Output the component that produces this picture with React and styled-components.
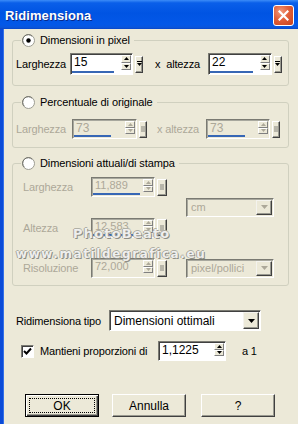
import React from "react";
import styled, { createGlobalStyle, css } from "styled-components";

const Global = createGlobalStyle`
  html, body { margin: 0; padding: 0; background: #ECE9D8; }
  body {
    width: 298px; height: 424px; overflow: hidden;
    font-family: "Liberation Sans", Arial, sans-serif; font-size: 11px; color: #000;
  }
  #root { width: 298px; height: 424px; }
`;

const GREY = "#ACA899";

const Window = styled.div`
  width: 298px; height: 424px; display: flex; flex-direction: column; background: #ECE9D8;
`;

const TitleBar = styled.div`
  height: 29px; flex: none; display: flex; align-items: center; justify-content: space-between;
  padding: 0 4px 0 5px; box-sizing: border-box;
  background: linear-gradient(to bottom, #3C8CF8 0%, #0A5FE9 10%, #0054E3 45%, #0358E8 85%, #0A56DC 94%, #0846C8 100%);
`;

const Title = styled.span`
  font: bold 13px "Liberation Sans", Arial, sans-serif; color: #fff;
  text-shadow: 1px 1px 0 #0A2A8A; letter-spacing: 0.1px; margin-top: 1px;
`;

const CloseBtn = styled.div`
  width: 21px; height: 21px; box-sizing: border-box; border: 1px solid #fff; border-radius: 3px;
  background: radial-gradient(circle at 35% 30%, #F29A7C 0%, #E2603A 45%, #C8421C 100%);
  display: flex; align-items: center; justify-content: center; margin-top: 1px;
`;

const Body = styled.div`
  flex: 1; display: flex; flex-direction: column; position: relative;
  border-left: 3px solid #0B4BD8; box-shadow: inset 1px 0 0 #3470E8;
  padding: 5px 9px 0 9px;
`;

const Group = styled.fieldset`
  margin: ${p => p.$mt}px 0 0 0; padding: 0; min-width: 0;
  border: 1px solid #D0D0BF; border-radius: 3px; position: relative;
`;

const Legend = styled.legend`
  margin-left: 8px; padding: 0 4px 0 1px; height: 13px; line-height: 13px;
  display: flex; align-items: center; gap: 5px;
  color: #000; font-size: 11px; letter-spacing: -0.1px;
`;

const Row = styled.div`
  display: flex; align-items: center;
  padding: ${p => p.$pad};
`;

const Label = styled.span`
  color: ${p => (p.$disabled ? GREY : "#000")};
  margin-left: ${p => p.$ml || 0}px;
  font-size: 11px; letter-spacing: -0.15px; white-space: nowrap;
  width: ${p => (p.$w ? `${p.$w}px` : "auto")};
  flex: none;
`;

const FieldGroup = styled.div`
  display: flex; align-items: center; gap: ${p => p.$gap}px;
  margin-left: ${p => p.$ml || 0}px;
`;

const FieldBox = styled.div`
  position: relative; box-sizing: border-box;
  width: ${p => p.$w}px; height: ${p => p.$h}px;
  background: ${p => (p.$disabled ? "#ECE9D8" : "#fff")};
  border: 1px solid; border-color: #7A7A72 #FFFFFF #FFFFFF #7A7A72;
  box-shadow: inset 1px 1px 0 ${p => (p.$disabled ? "#A8A89E" : "#404040")};
  display: flex; align-items: stretch;
  &::after {
    content: ""; position: absolute; left: 1px; bottom: 1px; height: 2px;
    width: ${p => p.$fill}px; background: #3767B5;
  }
`;

const Value = styled.span`
  flex: 1; padding: 1px 0 0 3px; line-height: ${p => p.$size + 2}px;
  font-size: ${p => p.$size}px; color: ${p => (p.$disabled ? GREY : "#000")};
  white-space: nowrap; overflow: hidden;
`;

const Spinner = styled.div`
  width: 10px; display: flex; flex-direction: column; margin: 1px 1px 4px 0; flex: none;
`;

const SpinBtn = styled.div`
  flex: 1; box-sizing: border-box; background: #ECE9D8;
  border: 1px solid; border-color: #FFFFFF #808080 #808080 #FFFFFF;
  display: flex; align-items: center; justify-content: center;
`;

const DropBtn = styled.div`
  width: ${p => p.$w}px; height: 17px; box-sizing: border-box; background: #ECE9D8;
  border: 1px solid; border-color: #FFFFFF #404040 #404040 #FFFFFF;
  box-shadow: inset -1px -1px 0 #9A9A90;
  display: flex; align-items: center; justify-content: center;
`;

const Combo = styled.div`
  box-sizing: border-box; width: ${p => p.$w}px; height: ${p => p.$h}px;
  background: ${p => (p.$disabled ? "#ECE9D8" : "#fff")};
  border: 1px solid; border-color: #7A7A72 #FFFFFF #FFFFFF #7A7A72;
  box-shadow: inset 1px 1px 0 ${p => (p.$disabled ? "#A8A89E" : "#404040")};
  display: flex; align-items: stretch; padding: 1px;
  ${p => p.$row && css`grid-row: ${p.$row}; grid-column: 3;`}
  align-self: center;
`;

const ComboText = styled.span`
  flex: 1; display: flex; align-items: center; padding-left: 3px;
  font-size: ${p => p.$size}px; color: ${p => (p.$disabled ? GREY : "#000")};
`;

const ComboBtn = styled.div`
  width: 16px; box-sizing: border-box; background: #ECE9D8;
  border: 1px solid; border-color: #F4F3EE #404040 #404040 #F4F3EE;
  box-shadow: inset -1px -1px 0 #9A9A90;
  display: flex; align-items: center; justify-content: center;
`;

const PrintGrid = styled.div`
  display: grid; grid-template-columns: 68px 95px 88px; column-gap: 0;
  grid-template-rows: 20px 20px 20px; row-gap: 20.5px; align-items: center;
  padding: 7px 0 7px 10px;
`;

const Watermark = styled.div`
  position: absolute; left: ${p => p.$x}px; top: ${p => p.$y}px;
  font: bold ${p => p.$size}px "DejaVu Sans", sans-serif; color: rgba(255,255,255,0.85);
  text-shadow: 1px 1px 0 #8E8E86, -1px 0 0 #A6A69C, 0 -1px 0 #B0B0A6;
  letter-spacing: ${p => p.$ls}px; white-space: nowrap; pointer-events: none;
`;

const TipoRow = styled.div`
  display: flex; align-items: center; margin: 24px 0 0 4px;
`;

const CheckRow = styled.div`
  display: flex; align-items: center; margin: 10px 0 0 9px;
`;

const CheckBox = styled.div`
  width: 13px; height: 13px; box-sizing: border-box; background: #fff;
  border: 1px solid; border-color: #7A7A72 #FFFFFF #FFFFFF #7A7A72;
  box-shadow: inset 1px 1px 0 #404040;
  display: flex; align-items: center; justify-content: center; margin-right: 6px;
`;

const ButtonRow = styled.div`
  display: flex; margin: 33px 0 0 13px; gap: 13px;
`;

const Button = styled.div`
  width: 74px; height: 23px; box-sizing: border-box; background: #ECE9D8;
  display: flex; align-items: center; justify-content: center; font-size: 12px;
  margin-left: ${p => p.$ml || 0}px;
  border: 1px solid; border-color: #FFFFFF #404040 #404040 #FFFFFF;
  box-shadow: inset -1px -1px 0 #9A9A90;
  ${p => p.$default && css`
    border: 1px solid #000;
    box-shadow: inset 1px 1px 0 #fff, inset -1px -1px 0 #404040, inset -2px -2px 0 #9A9A90;
  `}
`;

const Focus = styled.span`
  display: flex; align-items: center; justify-content: center;
  width: 66px; height: 15px; box-sizing: border-box; border: 1px dotted #000;
`;

const Tri = ({ up, color = "#000" }) => (
  <svg width="5" height="3" viewBox="0 0 5 3">
    <path d={up ? "M2.5 0 L5 3 L0 3Z" : "M0 0 L5 0 L2.5 3Z"} fill={color} />
  </svg>
);

const PopIcon = ({ disabled }) =>
  disabled ? (
    <svg width="4" height="6" viewBox="0 0 4 6"><rect width="4" height="6" fill="#B8B6AA" /></svg>
  ) : (
    <svg width="5" height="6" viewBox="0 0 5 6">
      <rect x="0" y="0" width="5" height="1" fill="#000" />
      <path d="M0 2 L5 2 L2.5 5Z" fill="#000" />
    </svg>
  );

const ComboArrow = ({ color }) => (
  <svg width="7" height="4" viewBox="0 0 7 4"><path d="M0 0 L7 0 L3.5 4Z" fill={color} /></svg>
);

const Radio = ({ checked }) => (
  <svg width="13" height="13" viewBox="0 0 13 13">
    <circle cx="6.5" cy="6.5" r="6" fill="#fff" stroke="#9C9C92" strokeWidth="1" />
    <path d="M2.3 10.2 A5 5 0 0 1 10.2 2.3" fill="none" stroke="#6E6E66" strokeWidth="1" />
    {checked && <circle cx="6.5" cy="6.5" r="2.2" fill="#000" />}
  </svg>
);

const SpinField = ({ value, w, h = 20, fill, size = 12, disabled, pop = true, ml, btnW = 8 }) => (
  <FieldGroup $gap={pop ? 2 : 0} $ml={ml}>
    <FieldBox $w={w} $h={h} $fill={fill} $disabled={disabled}>
      <Value $size={size} $disabled={disabled}>{value}</Value>
      <Spinner>
        <SpinBtn><Tri up color={disabled ? GREY : "#000"} /></SpinBtn>
        <SpinBtn><Tri color={disabled ? GREY : "#000"} /></SpinBtn>
      </Spinner>
    </FieldBox>
    {pop && (
      <DropBtn $w={btnW}><PopIcon disabled={disabled} /></DropBtn>
    )}
  </FieldGroup>
);

export default function App() {
  return (
    <>
      <Global />
      <Window>
        <TitleBar>
          <Title>Ridimensiona</Title>
          <CloseBtn>
            <svg width="11" height="11" viewBox="0 0 11 11">
              <path d="M1.5 1.5 L9.5 9.5 M9.5 1.5 L1.5 9.5" stroke="#fff" strokeWidth="2.2" strokeLinecap="square" />
            </svg>
          </CloseBtn>
        </TitleBar>
        <Body>
          <Group $mt={0}>
            <Legend><Radio checked />Dimensioni in pixel</Legend>
            <Row $pad="6px 0 10px 3px">
              <Label $w={54}>Larghezza</Label>
              <SpinField value="15" w={63} h={22} fill={42} />
              <Label $ml={12}>x&nbsp; altezza</Label>
              <SpinField value="22" w={64} h={22} fill={43} ml={8} />
            </Row>
          </Group>

          <Group $mt={10}>
            <Legend><Radio />Percentuale di originale</Legend>
            <Row $pad="10px 0 8px 3px">
              <Label $w={56} $disabled>Larghezza</Label>
              <SpinField value="73" w={65} fill={37} disabled />
              <Label $ml={10} $disabled>x altezza</Label>
              <SpinField value="73" w={64} fill={37} disabled ml={7} />
            </Row>
          </Group>

          <Group $mt={9}>
            <Legend><Radio />Dimensioni attuali/di stampa</Legend>
            <PrintGrid>
              <Label $disabled>Larghezza</Label>
              <SpinField value="11,889" w={64} fill={47} size={11} disabled btnW={10} />
              <Combo $w={88} $h={19} $row="1 / span 2" $disabled>
                <ComboText $size={11} $disabled>cm</ComboText>
                <ComboBtn><ComboArrow color={GREY} /></ComboBtn>
              </Combo>
              <Label $disabled>Altezza</Label>
              <SpinField value="12,583" w={64} fill={47} size={11} disabled btnW={10} />
              <Label $disabled>Risoluzione</Label>
              <SpinField value="72,000" w={64} fill={0} size={11} disabled btnW={10} />
              <Combo $w={88} $h={19} $disabled>
                <ComboText $size={11} $disabled>pixel/pollici</ComboText>
                <ComboBtn><ComboArrow color={GREY} /></ComboBtn>
              </Combo>
            </PrintGrid>
            <Watermark $x={60} $y={56} $size={13} $ls={1.2}>PhotoBeato</Watermark>
            <Watermark $x={3} $y={77} $size={12} $ls={1.6}>www.matildegrafica.eu</Watermark>
          </Group>

          <TipoRow>
            <Label $w={93}>Ridimensiona tipo</Label>
            <Combo $w={152} $h={21}>
              <ComboText $size={12}>Dimensioni ottimali</ComboText>
              <ComboBtn><ComboArrow color="#000" /></ComboBtn>
            </Combo>
          </TipoRow>

          <CheckRow>
            <CheckBox>
              <svg width="9" height="9" viewBox="0 0 9 9">
                <path d="M1 4 L3.5 6.5 L8 1.5" fill="none" stroke="#000" strokeWidth="2" />
              </svg>
            </CheckBox>
            <Label $w={118}>Mantieni proporzioni di</Label>
            <SpinField value="1,1225" w={68} fill={0} pop={false} />
            <Label $ml={16}>a 1</Label>
          </CheckRow>

          <ButtonRow>
            <Button $default><Focus>OK</Focus></Button>
            <Button>Annulla</Button>
            <Button $ml={2}>?</Button>
          </ButtonRow>
        </Body>
      </Window>
    </>
  );
}
